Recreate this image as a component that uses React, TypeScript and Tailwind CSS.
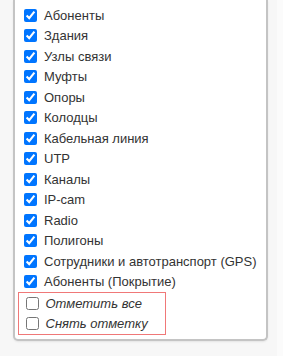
const layers = [
  'Абоненты',
  'Здания',
  'Узлы связи',
  'Муфты',
  'Опоры',
  'Колодцы',
  'Кабельная линия',
  'UTP',
  'Каналы',
  'IP-cam',
  'Radio',
  'Полигоны',
  'Сотрудники и автотранспорт (GPS)',
  'Абоненты (Покрытие)',
];

function Row({ label, checked, italic }: { label: string; checked?: boolean; italic?: boolean }) {
  return (
    <label className="flex h-[20.5px] items-center whitespace-nowrap">
      <input type="checkbox" defaultChecked={checked} className="m-0 h-[13px] w-[13px]" />
      <span className={`ml-[7px] text-[13px] leading-none text-[#333] ${italic ? 'italic' : ''}`}>{label}</span>
    </label>
  );
}

export default function App() {
  return (
    <div className="flex h-[356px] w-[283px] bg-[#f7f7f7] font-['Liberation_Sans',Arial,sans-serif]">
      <div className="ml-[13px] flex w-[255px] flex-col self-start rounded-b-[5px] border-x-2 border-b-2 border-[#c4c4c4] bg-white pb-[4px] pl-[9px] pt-[5px] shadow-[0_1px_2px_rgba(0,0,0,0.08)]">
        {layers.map((l) => (
          <Row key={l} label={l} checked />
        ))}
        <div className="-ml-[6px] w-[148px] border-[1.5px] border-[#f07878] pl-[6.5px]">
          <Row label="Отметить все" italic />
          <Row label="Снять отметку" italic />
        </div>
      </div>
      <div className="ml-auto h-full w-[6px] bg-[#fbfbfb]" />
    </div>
  );
}
